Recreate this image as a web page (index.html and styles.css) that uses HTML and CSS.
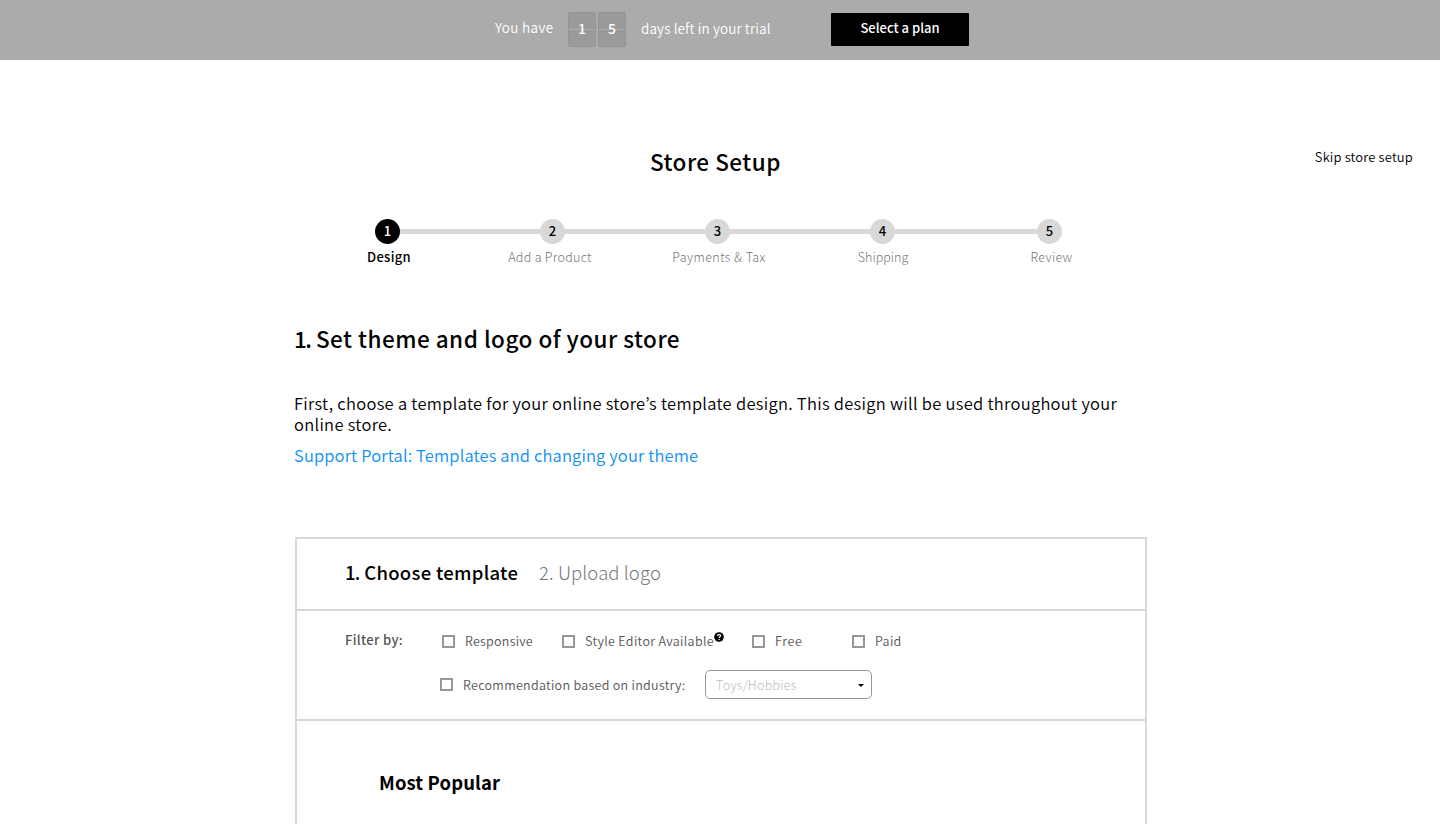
FILE: index.html
```html
<!DOCTYPE html>
<html lang="en">
<head>
<meta charset="utf-8">
<title>Store Setup</title>
<link rel="stylesheet" href="styles.css">
</head>
<body>
<header class="trial">
  <span class="trial-have">You have</span>
  <div class="counter"><span class="digit">1</span><span class="digit">5</span></div>
  <span class="trial-left">days left in your trial</span>
  <a class="plan">Select a plan</a>
</header>

<main class="page">
  <div class="title-row">
    <h1 class="title">Store Setup</h1>
    <a class="skip">Skip store setup</a>
  </div>

  <ol class="steps">
    <li class="step active"><span class="dot">1</span><span class="label label-design">Design</span></li>
    <li class="step"><span class="dot">2</span><span class="label label-product">Add a Product</span></li>
    <li class="step"><span class="dot">3</span><span class="label label-payments">Payments &amp; Tax</span></li>
    <li class="step"><span class="dot">4</span><span class="label label-shipping">Shipping</span></li>
    <li class="step"><span class="dot">5</span><span class="label label-review">Review</span></li>
  </ol>

  <section class="content">
    <h2 class="heading"><span class="num">1.</span> Set theme and logo of your store</h2>
    <p class="intro">First, choose a template for your online store’s template design. This design will be used throughout your<br>online store.</p>
    <a class="support">Support Portal: Templates and changing your theme</a>

    <div class="panel">
      <nav class="tabs">
        <span class="tab tab-active"><span class="num-small">1.</span> Choose template</span>
        <span class="tab tab-next">2. Upload logo</span>
      </nav>
      <div class="filters">
        <div class="filter-row">
          <span class="filter-title">Filter by:</span>
          <label class="check check-responsive"><i class="box"></i><span>Responsive</span></label>
          <label class="check check-editor"><i class="box"></i><span>Style Editor Available</span><svg class="help" width="10" height="10" viewBox="0 0 10 10"><circle cx="5" cy="5" r="4.8"/><path d="M3.5 3.9C3.5 2.1 6.6 2.1 6.6 3.8C6.6 4.8 5.2 4.8 5.1 6M5.1 6.9V8"/></svg></label>
          <label class="check check-free"><i class="box"></i><span>Free</span></label>
          <label class="check check-paid"><i class="box"></i><span>Paid</span></label>
        </div>
        <div class="industry-row">
          <label class="check check-industry"><i class="box"></i><span>Recommendation based on industry:</span></label>
          <div class="select"><span>Toys/Hobbies</span><i class="caret"></i></div>
        </div>
      </div>
      <h3 class="popular">Most Popular</h3>
    </div>
  </section>
</main>
</body>
</html>
```
FILE: styles.css
```css
* { box-sizing: border-box; }

body {
  margin: 0;
  height: 824px;
  overflow: hidden;
  background: #fff;
  color: #000;
  font-family: "Noto Sans CJK KR", sans-serif;
  font-weight: 350;
  line-height: 20px;
  white-space: nowrap;
}

h1, h2, h3, p, ol { margin: 0; padding: 0; }

/* Trial bar */
.trial {
  display: flex;
  align-items: flex-start;
  height: 60px;
  padding-left: 495px;
  background: #ababab;
  color: #fff;
  font-size: 13.5px;
}
.trial-have { width: 73px; padding-top: 17px; letter-spacing: .35px; }
.counter { display: flex; gap: 2px; width: 73px; padding-top: 12px; }
.digit {
  width: 28px;
  height: 35px;
  border: 1px solid #949494;
  border-radius: 2px;
  background: linear-gradient(#9a9a9a 17px, #adadad 17px, #adadad 18px, #9a9a9a 18px) 0 -1px / 100% 35px;
  font-size: 14px;
  font-weight: 500;
  line-height: 31px;
  text-align: center;
}
.trial-left { width: 190px; padding-top: 18px; letter-spacing: .13px; }
.plan {
  width: 138px;
  height: 33px;
  margin-top: 13px;
  border-radius: 1px;
  background: #000;
  font-size: 13px;
  font-weight: 500;
  line-height: 29px;
  letter-spacing: 0;
  text-align: center;
}

/* Title */
.title-row { display: flex; height: 159px; padding: 87px 27px 0 650px; justify-content: space-between; }
.title { margin-top: -1px; font-size: 22.5px; font-weight: 500; line-height: 30px; letter-spacing: .5px; }
.skip { font-size: 13px; letter-spacing: .15px; }

/* Progress steps */
.steps {
  display: grid;
  grid-template-columns: 165px 165px 165px 167px 25px;
  width: 687px;
  height: 104px;
  margin-left: 375px;
  background: linear-gradient(#d8d8d8, #d8d8d8) 12px 10px / 660px 5px no-repeat;
  list-style: none;
}
.step { display: flex; flex-direction: column; align-items: center; width: 25px; }
.dot {
  flex: none;
  width: 25px;
  height: 25px;
  border-radius: 50%;
  background: #d8d8d8;
  font-size: 13px;
  font-weight: 500;
  line-height: 23px;
  text-align: center;
}
.active .dot { background: #000; color: #fff; }
.label { margin-top: 3px; color: #777; font-size: 12.5px; font-weight: 300; }
.active .label { color: #000; font-size: 13px; font-weight: 500; }
.label-design { margin-left: 3px; letter-spacing: .3px; }
.label-product { margin-right: 5px; letter-spacing: .3px; }
.label-payments { margin-left: 3px; letter-spacing: .4px; }
.label-shipping { margin-left: 1px; letter-spacing: 0; }
.label-review { margin-left: 4px; letter-spacing: .3px; }

/* Intro copy */
.content { width: 853px; margin-left: 294px; }
.heading { font-size: 22.5px; font-weight: 500; line-height: 30px; letter-spacing: .5px; }
.num { letter-spacing: -1.6px; }
.intro { margin-top: 40px; font-size: 16.5px; line-height: 21px; letter-spacing: .29px; }
.support { display: block; margin-top: 10px; color: #0b8ff6; font-size: 16.5px; line-height: 21px; letter-spacing: .15px; }

/* Template panel */
.panel { margin: 71px 0 0 1px; height: 320px; border: 2px solid #d8d8d8; }
.tabs { display: flex; gap: 20px; height: 72px; padding: 21px 0 0 48px; border-bottom: 2px solid #d8d8d8; font-size: 18.5px; line-height: 24px; }
.tab-active { width: 173px; font-weight: 500; letter-spacing: .3px; }
.num-small { letter-spacing: -.7px; }
.tab-next { margin-left: 1px; color: #777; font-weight: 300; letter-spacing: .1px; }
.filters { height: 110px; padding: 19px 0 0 48px; border-bottom: 2px solid #d8d8d8; color: #555; font-size: 12.5px; }
.filter-row { display: flex; }
.filter-title { width: 97px; font-size: 13px; font-weight: 500; letter-spacing: .35px; }
.check { display: flex; gap: 10px; padding-top: 1px; letter-spacing: .35px; }
.box { flex: none; width: 13px; height: 13px; margin-top: 4px; border: 2px solid #979797; }
.check-responsive { width: 120px; letter-spacing: .25px; }
.check-editor { width: 190px; }
.check-free { width: 100px; letter-spacing: .7px; }
.help { margin: 1px 0 0 -10px; }
.help circle { fill: #000; }
.help path { fill: none; stroke: #fff; stroke-width: 1.3; }
.industry-row { display: flex; padding: 19px 0 0 95px; }
.check-industry { width: 265px; padding-top: 6px; letter-spacing: .3px; }
.check-industry .box { margin-top: 2px; }
.check-industry span { margin-top: -1px; }
.select {
  display: flex;
  justify-content: space-between;
  width: 167px;
  height: 29px;
  padding: 4px 7px 0 10px;
  border: 1px solid #979797;
  border-radius: 5px;
  color: #bbb;
  font-weight: 300;
  letter-spacing: .25px;
}
.caret { height: 0; margin-top: 9px; border: 3.5px solid transparent; border-top: 3.5px solid #000; border-bottom: 0; }
.popular { padding: 49px 0 0 82px; font-size: 18.5px; font-weight: 700; line-height: 24px; letter-spacing: .1px; }
```
